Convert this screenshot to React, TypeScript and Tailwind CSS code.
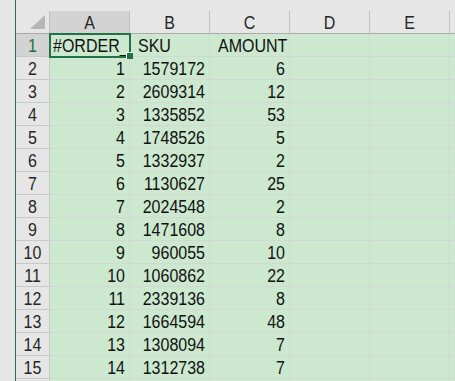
import React from "react";

const rows: [string, string, string][] = [
  ["1", "1579172", "6"],
  ["2", "2609314", "12"],
  ["3", "1335852", "53"],
  ["4", "1748526", "5"],
  ["5", "1332937", "2"],
  ["6", "1130627", "25"],
  ["7", "2024548", "2"],
  ["8", "1471608", "8"],
  ["9", "960055", "10"],
  ["10", "1060862", "22"],
  ["11", "2339136", "8"],
  ["12", "1664594", "48"],
  ["13", "1308094", "7"],
  ["14", "1312738", "7"],
];

const cols = ["A", "B", "C", "D", "E", "F"];

function Txt({ children }: { children: React.ReactNode }) {
  return (
    <span className="relative top-[3px] inline-block scale-y-[1.15] origin-[50%_76%]">
      {children}
    </span>
  );
}

function Cell({
  children,
  align = "left",
  pl = "",
}: {
  children?: React.ReactNode;
  align?: "left" | "right";
  pl?: string;
}) {
  return (
    <div
      className={
        "w-[80px] shrink-0 h-[23px] border-r border-b border-[#d4d8d4] bg-[#cce8cf] overflow-hidden whitespace-nowrap leading-[20px] text-[16px] text-[#111] " +
        (align === "right" ? "text-right pr-[4px] " : "") +
        pl
      }
    >
      {children !== undefined ? <Txt>{children}</Txt> : null}
    </div>
  );
}

function RowHead({ n, sel = false }: { n: string; sel?: boolean }) {
  return (
    <div
      className={
        "w-[34px] shrink-0 h-[23px] border-r border-b border-[#c8c8c8] text-center leading-[20px] text-[16px] " +
        (sel ? "bg-[#d3d3d3] text-[#217346]" : "bg-[#e6e6e6] text-[#262626]")
      }
    >
      <Txt>{n}</Txt>
    </div>
  );
}

export default function App() {
  return (
    <div
      className="relative w-[455px] h-[381px] overflow-hidden bg-[#e6e6e6] flex"
      style={{ fontFamily: '"Liberation Sans", Arial, sans-serif' }}
    >
      <div className="w-[16px] shrink-0 h-full border-r border-[#217346] bg-[#e6e6e6]" />
      <div className="flex flex-col">
        <div className="h-[11px] shrink-0" />
        {/* header row */}
        <div className="flex h-[23px] shrink-0 border-b border-[#ababab]">
          <div className="relative w-[34px] shrink-0 h-[22px] border-r border-[#c0c0c0] bg-[#e6e6e6]">
            <svg className="absolute left-[14px] top-[4px]" width="16" height="15" viewBox="0 0 16 15">
              <polygon points="0,14 15,14 15,0" fill="#b5b5b5" />
            </svg>
          </div>
          {cols.map((c, i) => (
            <div
              key={c}
              className={
                "w-[80px] shrink-0 h-[22px] border-r border-[#c0c0c0] text-center leading-[20px] text-[16px] text-[#262626] " +
                (i === 0 ? "bg-[#d3d3d3]" : "bg-[#e6e6e6]")
              }
            >
              <Txt>{c}</Txt>
            </div>
          ))}
        </div>
        {/* row 1 */}
        <div className="flex shrink-0">
          <RowHead n="1" sel />
          <Cell pl="pl-[3px]">#ORDER_ID</Cell>
          <Cell pl="pl-[8px]">SKU</Cell>
          <Cell pl="pl-[8px]">AMOUNT</Cell>
          <Cell />
          <Cell />
          <Cell />
        </div>
        {rows.map((r, i) => (
          <div key={i} className="flex shrink-0">
            <RowHead n={String(i + 2)} />
            <Cell align="right">{r[0]}</Cell>
            <Cell align="right">{r[1]}</Cell>
            <Cell align="right">{r[2]}</Cell>
            <Cell />
            <Cell />
            <Cell />
          </div>
        ))}
        <div className="flex shrink-0">
          <RowHead n="16" />
          <Cell />
          <Cell />
          <Cell />
          <Cell />
          <Cell />
          <Cell />
        </div>
      </div>
      {/* selection */}
      <div className="absolute left-[49px] top-[33px] w-[82px] h-[25px] border-2 border-[#217346]" />
      <div className="absolute left-[126px] top-[52px] w-[7px] h-[7px] bg-[#217346] border-l border-t border-white" />
    </div>
  );
}
